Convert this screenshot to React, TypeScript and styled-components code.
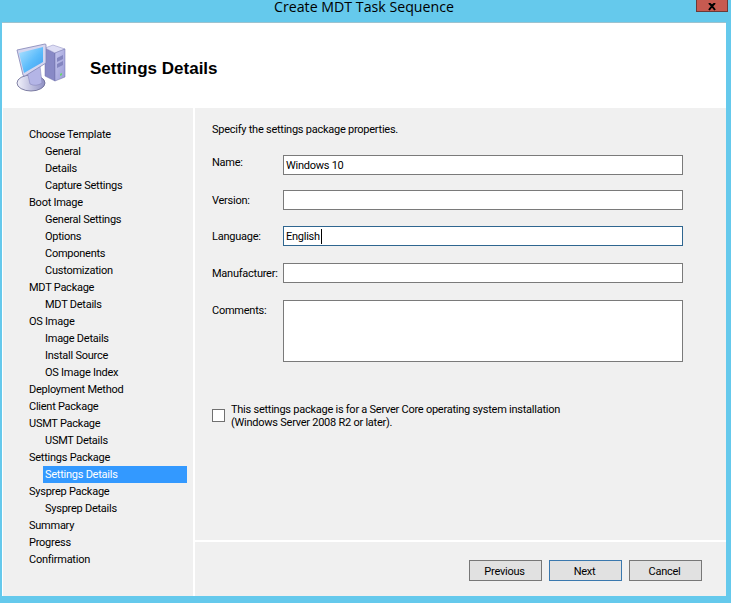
import { createGlobalStyle } from "styled-components";
import styled from "styled-components";

type NavItem = {
  label: string;
  sub?: boolean;
  active?: boolean;
};

const navItems: NavItem[] = [
  { label: "Choose Template" },
  { label: "General", sub: true },
  { label: "Details", sub: true },
  { label: "Capture Settings", sub: true },
  { label: "Boot Image" },
  { label: "General Settings", sub: true },
  { label: "Options", sub: true },
  { label: "Components", sub: true },
  { label: "Customization", sub: true },
  { label: "MDT Package" },
  { label: "MDT Details", sub: true },
  { label: "OS Image" },
  { label: "Image Details", sub: true },
  { label: "Install Source", sub: true },
  { label: "OS Image Index", sub: true },
  { label: "Deployment Method" },
  { label: "Client Package" },
  { label: "USMT Package" },
  { label: "USMT Details", sub: true },
  { label: "Settings Package" },
  { label: "Settings Details", sub: true, active: true },
  { label: "Sysprep Package" },
  { label: "Sysprep Details", sub: true },
  { label: "Summary" },
  { label: "Progress" },
  { label: "Confirmation" },
];

const GlobalStyle = createGlobalStyle`
  html, body {
    margin: 0;
    padding: 0;
    background: #65c9ec;
  }
`;

const Frame = styled.div`
  position: relative;
  width: 731px;
  height: 603px;
  box-sizing: border-box;
  padding: 0 5px 7px 2px;
  display: flex;
  flex-direction: column;
  background: #65c9ec;
  color: #000;
  font-family: Roboto, "Liberation Sans", sans-serif;
  font-size: 11px;
  letter-spacing: -0.25px;
  overflow: hidden;
`;

const TitleBar = styled.div`
  height: 22px;
  flex: none;
  box-sizing: border-box;
  text-align: center;
  font-family: "Open Sans", sans-serif;
  font-size: 14.2px;
  letter-spacing: 0;
  line-height: 14px;
`;

const CloseButton = styled.div`
  position: absolute;
  top: -4px;
  right: 3px;
  width: 32px;
  height: 16px;
  box-sizing: border-box;
  background: #c75a50;
  border: 1px solid #6b3a38;
  display: flex;
  align-items: flex-end;
  justify-content: center;
`;

const Header = styled.header`
  height: 86px;
  flex: none;
  box-sizing: border-box;
  background: #fff;
  border-top: 1px solid #9cc2cf;
  display: flex;
  align-items: center;
  padding-left: 10px;
  gap: 18px;
`;

const HeaderIcon = styled.div`
  width: 60px;
  height: 60px;
  margin-top: 5px;
`;

const HeaderTitle = styled.h1`
  margin: 6px 0 0;
  font-family: "Liberation Sans", Arial, sans-serif;
  font-size: 17px;
  font-weight: bold;
  letter-spacing: 0;
  line-height: 20px;
`;

const Body = styled.div`
  flex: 1;
  min-height: 0;
  display: flex;
  gap: 2px;
  background: #fff;
  padding-left: 1px;
`;

const Sidebar = styled.nav`
  width: 190px;
  flex: none;
  box-sizing: border-box;
  background: #f0f0f0;
  padding: 18px 6px 0 0;
`;

const NavRow = styled.div<{ $sub?: boolean; $active?: boolean }>`
  height: 17px;
  line-height: 17px;
  white-space: nowrap;
  margin-left: ${(p) => (p.$sub ? "40px" : "0")};
  padding-left: ${(p) => (p.$sub ? "2px" : "26px")};
  background: ${(p) => (p.$active ? "#3399ff" : "transparent")};
  color: ${(p) => (p.$active ? "#fff" : "#000")};
`;

const Main = styled.main`
  flex: 1;
  min-width: 0;
  display: flex;
  flex-direction: column;
  background: #fff;
  gap: 2px;
`;

const Content = styled.section`
  height: 432px;
  flex: none;
  box-sizing: border-box;
  background: #f0f0f0;
  padding: 13px 0 0 17px;
`;

const Intro = styled.p`
  margin: 0 0 17px;
  line-height: 17px;
`;

const FormRow = styled.div<{ $gap: number }>`
  display: flex;
  margin-bottom: ${(p) => p.$gap}px;
`;

const Label = styled.label<{ $raised?: boolean }>`
  width: 71px;
  flex: none;
  margin-top: ${(p) => (p.$raised ? "-1px" : "2px")};
  line-height: 17px;
  white-space: nowrap;
`;

const Field = styled.div<{ $focused?: boolean; $tall?: boolean }>`
  width: 400px;
  height: ${(p) => (p.$tall ? "62px" : "20px")};
  box-sizing: border-box;
  background: #fff;
  border: 1px solid ${(p) => (p.$focused ? "#2f6690" : "#7a7a7a")};
  padding-left: 2px;
  line-height: 20px;
  display: flex;
`;

const Caret = styled.span`
  width: 1px;
  height: 15px;
  margin: 2px 0 0 1px;
  background: #000;
`;

const CheckRow = styled.div`
  display: flex;
  align-items: flex-start;
  margin-top: 40px;
  gap: 6px;
`;

const CheckBox = styled.span`
  width: 13px;
  height: 13px;
  flex: none;
  margin-top: 7px;
  box-sizing: border-box;
  background: #fff;
  border: 1px solid #707070;
`;

const CheckText = styled.div`
  margin-top: 1px;
  line-height: 13px;
`;

const Footer = styled.footer`
  flex: 1;
  background: #f0f0f0;
  display: flex;
  justify-content: flex-end;
  gap: 7px;
  padding: 18px 24px 0 0;
`;

const Button = styled.button<{ $primary?: boolean }>`
  width: 73px;
  height: 21px;
  box-sizing: border-box;
  padding: 2px 2px 0 0;
  background: #e1e1e1;
  border: 1px solid ${(p) => (p.$primary ? "#3a78ae" : "#777")};
  border-radius: 0;
  font: inherit;
  letter-spacing: inherit;
  color: #000;
`;

function ComputerIcon() {
  return (
    <svg width="60" height="60" viewBox="0 0 60 60">
      <defs>
        <linearGradient id="screen" x1="0" y1="0" x2="1" y2="1">
          <stop offset="0" stopColor="#b4e4ff" />
          <stop offset="0.55" stopColor="#5cbcfb" />
          <stop offset="1" stopColor="#3f9df0" />
        </linearGradient>
        <linearGradient id="frontFace" x1="0" y1="0" x2="1" y2="1">
          <stop offset="0" stopColor="#c5c6ee" />
          <stop offset="1" stopColor="#9a9bd6" />
        </linearGradient>
        <linearGradient id="base" x1="0" y1="0" x2="1" y2="0">
          <stop offset="0" stopColor="#f2f2fb" />
          <stop offset="1" stopColor="#8f90c4" />
        </linearGradient>
        <filter id="soft">
          <feGaussianBlur stdDeviation="0.4" />
        </filter>
      </defs>
      <g filter="url(#soft)">
        <path d="M33 10 L43 15 L43 43 L33 38 Z" fill="#8889c6" stroke="#6d6ea8" strokeWidth="0.5" />
        <path d="M33 10 L41 7 L53 11 L43 15 Z" fill="#dedef5" stroke="#8a8bbf" strokeWidth="0.5" />
        <path d="M43 15 L53 11 L53 39 L43 43 Z" fill="url(#frontFace)" stroke="#6d6ea8" strokeWidth="0.5" />
        <path d="M45 20 L51 17 L51 21 L45 24 Z M45 26 L51 23 L51 27 L45 30 Z" fill="#8486c0" />
        <path d="M48 36 L50 35 L50 37 L48 38 Z" fill="#65d86a" />
        <ellipse cx="19" cy="45" rx="14" ry="8" fill="url(#base)" stroke="#65658f" strokeWidth="0.8" />
        <path d="M15 33 L28 28 L30 45 Q24 49 18 46 Z" fill="#b4b5e6" stroke="#7e7fb5" strokeWidth="0.5" />
        <path d="M5 12 L33 6 Q34 6 34 7 L34 25 L13 38 Q11 38 11 37 Z" fill="#d5d6ef" stroke="#8283b5" strokeWidth="0.8" />
        <path d="M7 15 L31 9 L31 24 L12 35 Z" fill="url(#screen)" />
      </g>
    </svg>
  );
}

export default function App() {
  return (
    <Frame>
      <GlobalStyle />
      <TitleBar>Create MDT Task Sequence</TitleBar>
      <CloseButton>
        <svg width="10" height="8" viewBox="0 0 10 8">
          <path d="M2 0 L5 3 L8 0 M5 3 L2 7 M5 3 L8 7" stroke="#000" strokeWidth="2" fill="none" />
        </svg>
      </CloseButton>
      <Header>
        <HeaderIcon>
          <ComputerIcon />
        </HeaderIcon>
        <HeaderTitle>Settings Details</HeaderTitle>
      </Header>
      <Body>
        <Sidebar>
          {navItems.map((item) => (
            <NavRow key={item.label} $sub={item.sub} $active={item.active}>
              {item.label}
            </NavRow>
          ))}
        </Sidebar>
        <Main>
          <Content>
            <Intro>Specify the settings package properties.</Intro>
            <FormRow $gap={15}>
              <Label $raised>Name:</Label>
              <Field>Windows 10</Field>
            </FormRow>
            <FormRow $gap={16}>
              <Label>Version:</Label>
              <Field />
            </FormRow>
            <FormRow $gap={17}>
              <Label>Language:</Label>
              <Field $focused>
                English
                <Caret />
              </Field>
            </FormRow>
            <FormRow $gap={17}>
              <Label>Manufacturer:</Label>
              <Field />
            </FormRow>
            <FormRow $gap={0}>
              <Label>Comments:</Label>
              <Field $tall />
            </FormRow>
            <CheckRow>
              <CheckBox />
              <CheckText>
                This settings package is for a Server Core operating system installation
                <br />
                (Windows Server 2008 R2 or later).
              </CheckText>
            </CheckRow>
          </Content>
          <Footer>
            <Button>Previous</Button>
            <Button $primary>Next</Button>
            <Button>Cancel</Button>
          </Footer>
        </Main>
      </Body>
    </Frame>
  );
}
